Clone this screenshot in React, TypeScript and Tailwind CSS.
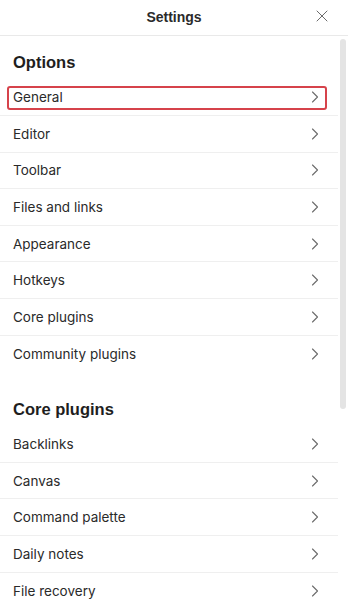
import React from 'react';
import { ChevronRight, X } from 'lucide-react';

const optionItems = [
  'General',
  'Editor',
  'Toolbar',
  'Files and links',
  'Appearance',
  'Hotkeys',
  'Core plugins',
  'Community plugins',
];

const pluginItems = ['Backlinks', 'Canvas', 'Command palette', 'Daily notes', 'File recovery'];

function Row({ label, active }: { label: string; active?: boolean }) {
  return (
    <div className="relative flex h-[36.6px] items-center justify-between pl-[13px] pr-[13px]">
      <span className="text-[13.5px] text-[#2a2a2a]">{label}</span>
      <ChevronRight className="h-[20px] w-[20px] text-[#6b6b6b]" strokeWidth={1.3} />
      {active && (
        <div className="pointer-events-none absolute top-[6.5px] right-[11px] bottom-[5px] left-[7px] rounded-[3px] border-2 border-[#d6434b]" />
      )}
    </div>
  );
}

export default function App() {
  return (
    <div className="relative flex h-[602px] w-[348px] flex-col overflow-hidden bg-white font-['Inter',sans-serif]">
      {/* Header */}
      <div className="relative flex h-[36px] shrink-0 items-center justify-center border-b border-[#e9e9e9]">
        <span className="font-['Liberation_Sans',Arial,sans-serif] text-[14px] font-semibold text-[#2a2a2a]">Settings</span>
        <button className="absolute top-[6px] right-[16px] text-[#6b6b6b]">
          <X className="h-[20px] w-[20px]" strokeWidth={1.2} />
        </button>
      </div>

      <div className="relative flex-1">
        <div className="mr-[10px]">
          <h2 className="pt-[16px] pl-[13px] font-['Liberation_Sans',Arial,sans-serif] text-[16.5px] leading-[20px] font-bold text-[#1e1e1e]">
            Options
          </h2>
          <div className="mt-[7.5px] divide-y divide-[#efefef]">
            {optionItems.map((item, i) => (
              <Row key={item} label={item} active={i === 0} />
            ))}
          </div>

          <h2 className="mt-[27px] pl-[13px] font-['Liberation_Sans',Arial,sans-serif] text-[16.5px] leading-[20px] font-bold text-[#1e1e1e]">
            Core plugins
          </h2>
          <div className="mt-[7px] divide-y divide-[#efefef]">
            {pluginItems.map((item) => (
              <Row key={item} label={item} />
            ))}
          </div>
        </div>

        {/* scrollbar */}
        <div className="absolute top-[3px] right-[2px] h-[370px] w-[6px] rounded-full bg-[#e4e4e4]" />
      </div>
    </div>
  );
}
